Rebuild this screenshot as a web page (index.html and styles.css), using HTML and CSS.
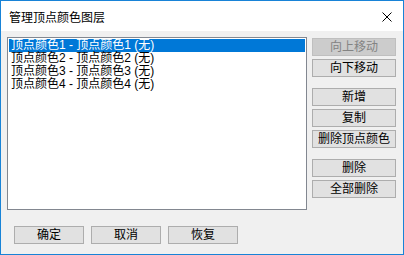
FILE: index.html
```html
<!DOCTYPE html>
<html lang="zh-CN">
<head>
    <meta charset="UTF-8">
    <title>管理顶点颜色图层</title>
    <link rel="stylesheet" href="styles.css">
</head>
<body>
    <div class="window">
        <div class="titlebar">
            <span class="title">管理顶点颜色图层</span>
            <svg class="close" width="10" height="10" viewBox="0 0 10 10">
                <path d="M0.5 0.5 L9.5 9.5 M9.5 0.5 L0.5 9.5" stroke="#000" stroke-width="1" fill="none"/>
            </svg>
        </div>
        <div class="client">
            <div class="main">
                <div class="listbox">
                    <div class="item selected">顶点颜色1 - 顶点颜色1 (无)</div>
                    <div class="item">顶点颜色2 - 顶点颜色2 (无)</div>
                    <div class="item">顶点颜色3 - 顶点颜色3 (无)</div>
                    <div class="item">顶点颜色4 - 顶点颜色4 (无)</div>
                </div>
                <div class="side">
                    <div class="group">
                        <button class="btn" disabled>向上移动</button>
                        <button class="btn">向下移动</button>
                    </div>
                    <div class="group">
                        <button class="btn">新增</button>
                        <button class="btn">复制</button>
                        <button class="btn">删除顶点颜色</button>
                    </div>
                    <div class="group">
                        <button class="btn">删除</button>
                        <button class="btn">全部删除</button>
                    </div>
                </div>
            </div>
            <div class="footer">
                <button class="btn wide">确定</button>
                <button class="btn wide">取消</button>
                <button class="btn wide">恢复</button>
            </div>
        </div>
    </div>
</body>
</html>
```

FILE: styles.css
```css
body { margin: 0; font-family: "Liberation Sans", "Noto Sans CJK SC", sans-serif; font-size: 12px; }
.window { width: 402px; height: 253px; border: 1px solid #1883d7; background: #f0f0f0; display: flex; flex-direction: column; }
.titlebar { height: 30px; background: white; display: flex; align-items: center; justify-content: space-between; padding: 0 11px 0 8px; }
.title { font-size: 12px; color: #000; }
.close { display: block; margin-top: 1px; }
.client { flex: 1; padding: 6px 7px 0 6px; }
.main { display: flex; gap: 5px; }
.listbox { width: 296px; height: 169px; border: 1px solid #828790; background: white; padding: 1px; }
.item { height: 13px; line-height: 13px; padding-left: 2px; white-space: nowrap; color: #000; }
.item.selected { background: #0078d7; color: white; }
.side { display: flex; flex-direction: column; gap: 11px; margin-top: 1px; }
.group { display: flex; flex-direction: column; gap: 3px; }
.btn { width: 84px; height: 18px; padding: 0; margin: 0; background: #e1e1e1; border: 1px solid #adadad; font-family: inherit; font-size: 12px; line-height: 16px; color: #000; }
.btn:disabled { background: #cccccc; border-color: #bfbfbf; color: #838383; }
.footer { display: flex; gap: 7px; margin: 16px 0 0 7px; }
.btn.wide { width: 70px; }
```
